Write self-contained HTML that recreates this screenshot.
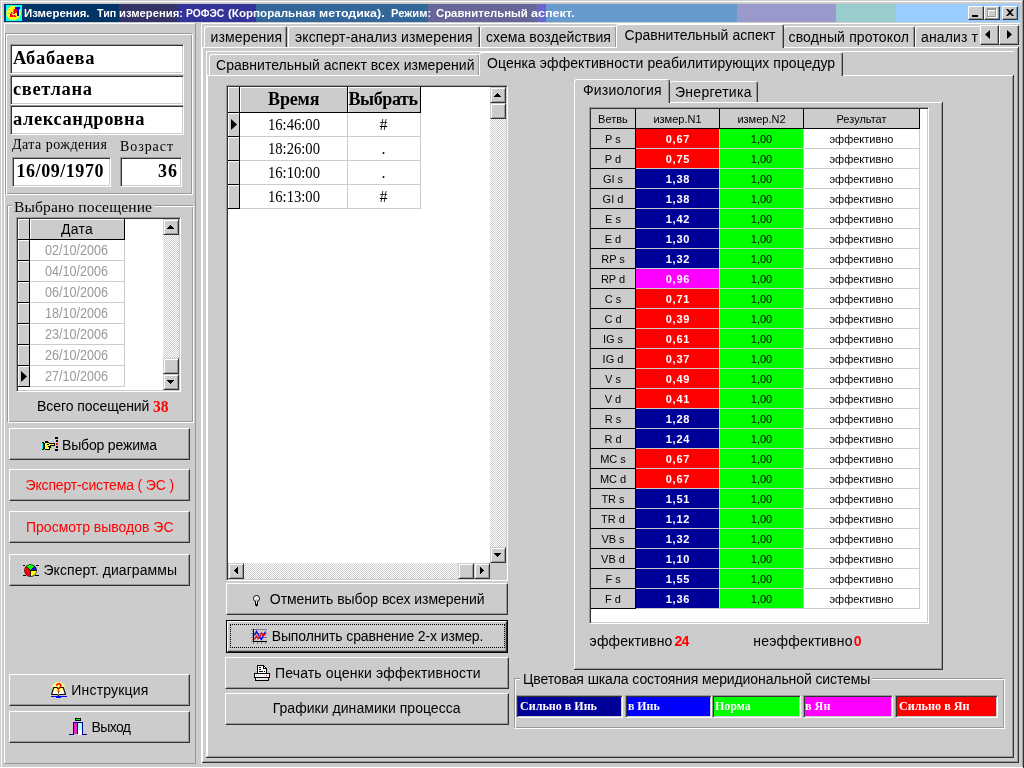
<!DOCTYPE html>
<html lang="ru"><head><meta charset="utf-8"><title>Измерения</title><style>
html,body{margin:0;padding:0}
body{width:1024px;height:768px;overflow:hidden;background:#cccccc;position:relative;font-family:'Liberation Sans',sans-serif;font-size:14px;color:#000}
#w{position:absolute;left:0;top:0;width:1024px;height:768px;will-change:transform}
.a{position:absolute;box-sizing:content-box}
.t{white-space:pre}
.rs{border:1px solid;border-color:#fff #333 #333 #fff;box-shadow:inset -1px -1px 0 #999;background:#ccc}
.sb{border:1px solid;border-color:#ccc #333 #333 #ccc;box-shadow:inset 1px 1px 0 #fff,inset -1px -1px 0 #999;background:#ccc}
.sk{border:1px solid;border-color:#999 #fff #fff #999;box-shadow:inset 1px 1px 0 #333,inset -1px -1px 0 #ccc}
.et{border:1px solid;border-color:#999 #fff #fff #999;box-shadow:inset 1px 1px 0 #fff,inset -1px -1px 0 #999}
.tab{background:#ccc;box-sizing:border-box;border-left:1px solid #fff;border-top:1px solid #fff;border-right:1px solid #333;border-radius:3px 3px 0 0;box-shadow:inset -1px 0 0 #999}
.trk{background-color:#fff;background-image:linear-gradient(45deg,#ccc 25%,transparent 25%,transparent 75%,#ccc 75%),linear-gradient(45deg,#ccc 25%,transparent 25%,transparent 75%,#ccc 75%);background-size:2px 2px;background-position:0 0,1px 1px}
</style></head><body><div id="w">
<div class="a " style="left:1px;top:1px;width:1022px;height:1px;background:#ffffff"></div>
<div class="a " style="left:1px;top:1px;width:1px;height:766px;background:#ffffff"></div>
<div class="a " style="left:0px;top:767px;width:1024px;height:1px;background:#ffffff"></div>
<div class="a " style="left:1022px;top:1px;width:1px;height:766px;background:#999999"></div>
<div class="a " style="left:1023px;top:0px;width:1px;height:768px;background:#333333"></div>
<div class="a " style="left:4px;top:4px;width:115px;height:18px;background:#003366"></div>
<div class="a " style="left:119px;top:4px;width:58px;height:18px;background:#333366"></div>
<div class="a " style="left:177px;top:4px;width:79px;height:18px;background:#333399"></div>
<div class="a " style="left:256px;top:4px;width:172px;height:18px;background:#336699"></div>
<div class="a " style="left:428px;top:4px;width:109px;height:18px;background:#666699"></div>
<div class="a " style="left:537px;top:4px;width:9px;height:18px;background:#6666cc"></div>
<div class="a " style="left:546px;top:4px;width:191px;height:18px;background:#6699cc"></div>
<div class="a " style="left:737px;top:4px;width:99px;height:18px;background:#9999cc"></div>
<div class="a " style="left:836px;top:4px;width:60px;height:18px;background:#99cccc"></div>
<div class="a " style="left:896px;top:4px;width:124px;height:18px;background:#99ccff"></div>
<svg class="a" style="left:6px;top:5px" width="16" height="16" viewBox="0 0 16 16" shape-rendering="crispEdges"><rect width="16" height="16" fill="#00ffff"/><circle cx="7.5" cy="8" r="7.3" fill="#ffff00" shape-rendering="auto"/><path d="M5 8h3V5h2v3M5 8v3h5" stroke="#ff0000" stroke-width="1.2" fill="none"/><path d="M12 2v8M9 3h5M11 10h2" stroke="#0000ff" stroke-width="1.2" fill="none"/><path d="M2 3l10 10M7.5 1v14M1 8h6" stroke="#cccccc" stroke-width="0.6" fill="none"/><rect x="7" y="8" width="1" height="1" fill="#00cc00"/></svg>
<div class="a t" style="left:23.8px;top:6px;line-height:14px;font-family:'Liberation Sans',sans-serif;font-size:11.5px;font-weight:bold;color:#fff;transform:scaleX(0.9931);transform-origin:0 0;">Измерения.</div>
<div class="a t" style="left:96.6px;top:6px;line-height:14px;font-family:'Liberation Sans',sans-serif;font-size:11.5px;font-weight:bold;color:#fff;transform:scaleX(0.9316);transform-origin:0 0;">Тип</div>
<div class="a t" style="left:119.3px;top:6px;line-height:14px;font-family:'Liberation Sans',sans-serif;font-size:11.5px;font-weight:bold;color:#fff;transform:scaleX(0.9787);transform-origin:0 0;">измерения:</div>
<div class="a t" style="left:185.5px;top:6px;line-height:14px;font-family:'Liberation Sans',sans-serif;font-size:11.5px;font-weight:bold;color:#fff;transform:scaleX(0.8956);transform-origin:0 0;">РОФЭС</div>
<div class="a t" style="left:228px;top:6px;line-height:14px;font-family:'Liberation Sans',sans-serif;font-size:11.5px;font-weight:bold;color:#fff;transform:scaleX(1.0079);transform-origin:0 0;">(Корпоральная</div>
<div class="a t" style="left:319.2px;top:6px;line-height:14px;font-family:'Liberation Sans',sans-serif;font-size:11.5px;font-weight:bold;color:#fff;transform:scaleX(1.0815);transform-origin:0 0;">методика).</div>
<div class="a t" style="left:390.6px;top:6px;line-height:14px;font-family:'Liberation Sans',sans-serif;font-size:11.5px;font-weight:bold;color:#fff;transform:scaleX(0.9757);transform-origin:0 0;">Режим:</div>
<div class="a t" style="left:435.8px;top:6px;line-height:14px;font-family:'Liberation Sans',sans-serif;font-size:11.5px;font-weight:bold;color:#fff;transform:scaleX(0.9854);transform-origin:0 0;">Сравнительный</div>
<div class="a t" style="left:531px;top:6px;line-height:14px;font-family:'Liberation Sans',sans-serif;font-size:11.5px;font-weight:bold;color:#fff;transform:scaleX(1.0952);transform-origin:0 0;">аспект.</div>
<div class="a rs " style="left:968px;top:6px;width:14px;height:12px;"><div class="a" style="left:3px;top:8px;width:6px;height:2px;background:#000"></div></div>
<div class="a rs " style="left:984px;top:6px;width:14px;height:12px;"><div class="a" style="left:3px;top:2px;width:7px;height:6px;border:1px solid #fff;border-top-width:2px"></div><div class="a" style="left:2px;top:1px;width:7px;height:6px;border:1px solid #999;border-top-width:2px"></div></div>
<div class="a rs " style="left:1002px;top:6px;width:14px;height:12px;"><svg class="a" style="left:3px;top:2px" width="8" height="7" viewBox="0 0 8 7"><path d="M0 0h2l2 2 2-2h2L5 3.5 8 7H6L4 5 2 7H0L3 3.5z" fill="#000"/></svg></div>
<div class="a " style="left:4px;top:23px;width:192px;height:1px;background:#ffffff"></div>
<div class="a " style="left:4px;top:23px;width:1px;height:740px;background:#ffffff"></div>
<div class="a " style="left:195px;top:23px;width:1px;height:741px;background:#999999"></div>
<div class="a " style="left:4px;top:763px;width:192px;height:1px;background:#999999"></div>
<div class="a et" style="left:5px;top:33px;width:186px;height:160px;"></div>
<div class="a sk " style="left:10px;top:44px;width:172px;height:28px;background:#fff"></div>
<div class="a sk " style="left:10px;top:75px;width:172px;height:28px;background:#fff"></div>
<div class="a sk " style="left:10px;top:105px;width:172px;height:28px;background:#fff"></div>
<div class="a t" style="left:13px;top:47px;line-height:23px;font-family:'Liberation Serif',serif;font-size:18.5px;font-weight:bold;letter-spacing:0.66px;">Абабаева</div>
<div class="a t" style="left:13px;top:78px;line-height:23px;font-family:'Liberation Serif',serif;font-size:18.5px;font-weight:bold;letter-spacing:0.63px;">светлана</div>
<div class="a t" style="left:13px;top:108px;line-height:23px;font-family:'Liberation Serif',serif;font-size:18.5px;font-weight:bold;letter-spacing:0.55px;">александровна</div>
<div class="a t" style="left:12px;top:136px;line-height:18px;font-family:'Liberation Serif',serif;font-size:14px;letter-spacing:0.46px;">Дата рождения</div>
<div class="a t" style="left:120px;top:138px;line-height:18px;font-family:'Liberation Serif',serif;font-size:14px;letter-spacing:0.93px;">Возраст</div>
<div class="a sk " style="left:12px;top:157px;width:97px;height:28px;background:#fff"></div>
<div class="a sk " style="left:120px;top:157px;width:60px;height:28px;background:#fff"></div>
<div class="a t" style="left:16.5px;top:160px;line-height:22px;font-family:'Liberation Serif',serif;font-size:18px;font-weight:bold;letter-spacing:0.55px;">16/09/1970</div>
<div class="a t" style="left:158px;top:160px;line-height:22px;font-family:'Liberation Serif',serif;font-size:18px;font-weight:bold;letter-spacing:1px;">36</div>
<div class="a et" style="left:7px;top:205px;width:185px;height:216px;"></div>
<div class="a " style="left:12px;top:199px;width:142px;height:12px;background:#ccc"></div>
<div class="a t" style="left:14px;top:197px;line-height:19px;font-family:'Liberation Serif',serif;font-size:15.5px;letter-spacing:0.13px;">Выбрано посещение</div>
<div class="a sk " style="left:16px;top:217px;width:163px;height:173px;background:#fff"></div>
<div class="a " style="left:18px;top:219px;width:11px;height:20px;background:#ccc;box-shadow:inset 1px 1px 0 #fff;"></div>
<div class="a " style="left:29px;top:219px;width:1px;height:21px;background:#000000"></div>
<div class="a " style="left:30px;top:219px;width:94px;height:20px;background:#ccc;box-shadow:inset 1px 1px 0 #fff;"></div>
<div class="a t" style="left:61px;top:220px;line-height:18px;font-family:'Liberation Sans',sans-serif;font-size:14px;letter-spacing:0.26px;">Дата</div>
<div class="a " style="left:124px;top:219px;width:1px;height:21px;background:#000000"></div>
<div class="a " style="left:18px;top:239px;width:107px;height:1px;background:#000000"></div>
<div class="a " style="left:18px;top:240px;width:11px;height:20px;background:#ccc;box-shadow:inset 1px 1px 0 #fff;"></div>
<div class="a " style="left:29px;top:240px;width:1px;height:21px;background:#000000"></div>
<div class="a " style="left:18px;top:260px;width:12px;height:1px;background:#000000"></div>
<div class="a t" style="left:45.4px;top:241px;line-height:18px;font-family:'Liberation Sans',sans-serif;font-size:14px;color:#999;transform:scaleX(0.899);transform-origin:0 0;">02/10/2006</div>
<div class="a " style="left:30px;top:260px;width:94px;height:1px;background:#cccccc"></div>
<div class="a " style="left:124px;top:240px;width:1px;height:21px;background:#cccccc"></div>
<div class="a " style="left:18px;top:261px;width:11px;height:20px;background:#ccc;box-shadow:inset 1px 1px 0 #fff;"></div>
<div class="a " style="left:29px;top:261px;width:1px;height:21px;background:#000000"></div>
<div class="a " style="left:18px;top:281px;width:12px;height:1px;background:#000000"></div>
<div class="a t" style="left:45.4px;top:262px;line-height:18px;font-family:'Liberation Sans',sans-serif;font-size:14px;color:#999;transform:scaleX(0.899);transform-origin:0 0;">04/10/2006</div>
<div class="a " style="left:30px;top:281px;width:94px;height:1px;background:#cccccc"></div>
<div class="a " style="left:124px;top:261px;width:1px;height:21px;background:#cccccc"></div>
<div class="a " style="left:18px;top:282px;width:11px;height:20px;background:#ccc;box-shadow:inset 1px 1px 0 #fff;"></div>
<div class="a " style="left:29px;top:282px;width:1px;height:21px;background:#000000"></div>
<div class="a " style="left:18px;top:302px;width:12px;height:1px;background:#000000"></div>
<div class="a t" style="left:45.4px;top:283px;line-height:18px;font-family:'Liberation Sans',sans-serif;font-size:14px;color:#999;transform:scaleX(0.899);transform-origin:0 0;">06/10/2006</div>
<div class="a " style="left:30px;top:302px;width:94px;height:1px;background:#cccccc"></div>
<div class="a " style="left:124px;top:282px;width:1px;height:21px;background:#cccccc"></div>
<div class="a " style="left:18px;top:303px;width:11px;height:20px;background:#ccc;box-shadow:inset 1px 1px 0 #fff;"></div>
<div class="a " style="left:29px;top:303px;width:1px;height:21px;background:#000000"></div>
<div class="a " style="left:18px;top:323px;width:12px;height:1px;background:#000000"></div>
<div class="a t" style="left:45.4px;top:304px;line-height:18px;font-family:'Liberation Sans',sans-serif;font-size:14px;color:#999;transform:scaleX(0.899);transform-origin:0 0;">18/10/2006</div>
<div class="a " style="left:30px;top:323px;width:94px;height:1px;background:#cccccc"></div>
<div class="a " style="left:124px;top:303px;width:1px;height:21px;background:#cccccc"></div>
<div class="a " style="left:18px;top:324px;width:11px;height:20px;background:#ccc;box-shadow:inset 1px 1px 0 #fff;"></div>
<div class="a " style="left:29px;top:324px;width:1px;height:21px;background:#000000"></div>
<div class="a " style="left:18px;top:344px;width:12px;height:1px;background:#000000"></div>
<div class="a t" style="left:45.4px;top:325px;line-height:18px;font-family:'Liberation Sans',sans-serif;font-size:14px;color:#999;transform:scaleX(0.899);transform-origin:0 0;">23/10/2006</div>
<div class="a " style="left:30px;top:344px;width:94px;height:1px;background:#cccccc"></div>
<div class="a " style="left:124px;top:324px;width:1px;height:21px;background:#cccccc"></div>
<div class="a " style="left:18px;top:345px;width:11px;height:20px;background:#ccc;box-shadow:inset 1px 1px 0 #fff;"></div>
<div class="a " style="left:29px;top:345px;width:1px;height:21px;background:#000000"></div>
<div class="a " style="left:18px;top:365px;width:12px;height:1px;background:#000000"></div>
<div class="a t" style="left:45.4px;top:346px;line-height:18px;font-family:'Liberation Sans',sans-serif;font-size:14px;color:#999;transform:scaleX(0.899);transform-origin:0 0;">26/10/2006</div>
<div class="a " style="left:30px;top:365px;width:94px;height:1px;background:#cccccc"></div>
<div class="a " style="left:124px;top:345px;width:1px;height:21px;background:#cccccc"></div>
<div class="a " style="left:18px;top:366px;width:11px;height:20px;background:#ccc;box-shadow:inset 1px 1px 0 #fff;"></div>
<div class="a " style="left:29px;top:366px;width:1px;height:21px;background:#000000"></div>
<div class="a " style="left:18px;top:386px;width:12px;height:1px;background:#000000"></div>
<div class="a t" style="left:45.4px;top:367px;line-height:18px;font-family:'Liberation Sans',sans-serif;font-size:14px;color:#999;transform:scaleX(0.899);transform-origin:0 0;">27/10/2006</div>
<div class="a " style="left:30px;top:386px;width:94px;height:1px;background:#cccccc"></div>
<div class="a " style="left:124px;top:366px;width:1px;height:21px;background:#cccccc"></div>
<svg class="a" style="left:21px;top:371px" width="6" height="11"><path d="M0 0l6 5.5L0 11z" fill="#000"/></svg>
<div class="a trk" style="left:163px;top:219px;width:16px;height:171px;"></div>
<div class="a sb" style="left:163px;top:219px;width:14px;height:14px;"><div class="a" style="left:6px;top:5px;width:1px;height:1px;background:#000"></div><div class="a" style="left:5px;top:6px;width:3px;height:1px;background:#000"></div><div class="a" style="left:4px;top:7px;width:5px;height:1px;background:#000"></div><div class="a" style="left:3px;top:8px;width:7px;height:1px;background:#000"></div></div>
<div class="a sb" style="left:163px;top:358px;width:14px;height:14px;"></div>
<div class="a sb" style="left:163px;top:374px;width:14px;height:14px;"><div class="a" style="left:3px;top:5px;width:7px;height:1px;background:#000"></div><div class="a" style="left:4px;top:6px;width:5px;height:1px;background:#000"></div><div class="a" style="left:5px;top:7px;width:3px;height:1px;background:#000"></div><div class="a" style="left:6px;top:8px;width:1px;height:1px;background:#000"></div></div>
<div class="a t" style="left:37px;top:397px;line-height:18px;font-family:'Liberation Sans',sans-serif;font-size:14px;letter-spacing:-0.06px;">Всего посещений</div>
<div class="a t" style="left:152.8px;top:396px;line-height:21px;font-family:'Liberation Serif',serif;font-size:17px;font-weight:bold;color:#f00;transform:scaleX(0.9118);transform-origin:0 0;">38</div>
<div class="a rs " style="left:9px;top:428px;width:179px;height:30px;"></div>
<div class="a" style="left:42px;top:437px;line-height:0"><svg width="17" height="15" viewBox="0 0 17 15" shape-rendering="crispEdges"><rect x="0" y="5" width="2" height="8" fill="#000"/><rect x="0" y="6" width="1" height="6" fill="#00ffff"/><path d="M2.5 6.5L3.5 5.5 6.5 5.5 7.5 6.5 12.5 6.5 12.5 8.5 8.5 8.5 8.5 10.5 7.5 10.5 7.5 12.5 3.5 12.5 2.5 11.5z" fill="#ffff33" stroke="#000" stroke-width="1"/><rect x="3" y="4" width="3" height="1" fill="#000"/><rect x="5" y="7" width="2" height="1" fill="#000"/><rect x="6" y="9" width="2" height="1" fill="#000"/><rect x="13" y="0" width="3" height="2" fill="#000"/><rect x="14" y="3" width="2" height="2" fill="#000"/><rect x="14" y="6" width="2" height="2" fill="#f00"/><rect x="14" y="9" width="2" height="2" fill="#000"/><rect x="13" y="12" width="3" height="2" fill="#000"/></svg></div>
<div class="a t" style="left:62px;top:436px;line-height:18px;font-family:'Liberation Sans',sans-serif;font-size:14px;letter-spacing:-0.17px;">Выбор режима</div>
<div class="a rs " style="left:9px;top:469px;width:179px;height:30px;"></div>
<div class="a t" style="left:25.5px;top:476px;line-height:18px;font-family:'Liberation Sans',sans-serif;font-size:14px;letter-spacing:-0.15px;color:#f00;">Эксперт-система ( ЭС )</div>
<div class="a rs " style="left:9px;top:511px;width:179px;height:30px;"></div>
<div class="a t" style="left:26px;top:518px;line-height:18px;font-family:'Liberation Sans',sans-serif;font-size:14px;color:#f00;">Просмотр выводов ЭС</div>
<div class="a rs " style="left:9px;top:554px;width:179px;height:30px;"></div>
<div class="a" style="left:22px;top:563px;line-height:0"><svg width="17" height="15" viewBox="0 0 17 15"><circle cx="8.5" cy="7.5" r="6.3" fill="#000"/><path d="M8.5 7.5L4.4 3.4A5.8 5.8 0 0 1 12.6 3.4z" fill="#00ff00"/><path d="M8.5 7.5L12.6 3.4A5.8 5.8 0 0 1 14.3 7.5z" fill="#0000ff"/><path d="M8.5 7.5H14.3A5.8 5.8 0 0 1 8.5 13.3z" fill="#ffff00"/><path d="M8.5 7.5V13.3A5.8 5.8 0 0 1 4.4 3.4z" fill="#ff0000"/><path d="M8.5 7.5L4.4 3.4M8.5 7.5L12.6 3.4M8.5 7.5H14.3M8.5 7.5V13.3" stroke="#000" stroke-width="0.8" fill="none"/><path d="M1 2.5h2M14 2.5h3M1 12.5h3M13 12.5h4" stroke="#000" shape-rendering="crispEdges"/></svg></div>
<div class="a t" style="left:43.5px;top:561px;line-height:18px;font-family:'Liberation Sans',sans-serif;font-size:14px;letter-spacing:0.05px;">Эксперт. диаграммы</div>
<div class="a rs " style="left:9px;top:674px;width:179px;height:30px;"></div>
<div class="a" style="left:51px;top:682px;line-height:0"><svg width="16" height="16" viewBox="0 0 16 16"><path d="M5 0H10L13.5 3.5V8H1.5V3.5Z" fill="#ffff77"/><path d="M1.2 12L2.6 8H12.4L13.8 12Z" fill="#fff"/><path d="M4.5 6H10.5V10.5H4.5Z" fill="#ffff77"/><path d="M0.5 12.5L2.7 5.5H6L7.5 7 9 5.5H12.3L14.5 12.5" fill="none" stroke="#000" stroke-width="1.1"/><path d="M0.5 12.5H6L7.5 13.5 9 12.5H14.5" stroke="#000" fill="none"/><path d="M7.5 9.5V13" stroke="#666" stroke-width="0.8"/><path d="M0 14.5h15.5M5 15.5h5" stroke="#0000ff" shape-rendering="crispEdges"/><text x="4.1" y="9.9" font-family="Liberation Sans,sans-serif" font-weight="bold" font-size="13" fill="#f00" transform="translate(0.6 0) scale(0.88 1)">?</text></svg></div>
<div class="a t" style="left:71.3px;top:681px;line-height:18px;font-family:'Liberation Sans',sans-serif;font-size:14px;letter-spacing:0.19px;">Инструкция</div>
<div class="a rs " style="left:9px;top:711px;width:179px;height:30px;"></div>
<div class="a" style="left:69px;top:718px;line-height:0"><svg width="19" height="17" viewBox="0 0 19 17" shape-rendering="crispEdges"><rect x="6" y="0" width="6" height="3" fill="#000"/><rect x="7" y="1" width="4" height="1" fill="#00ff00"/><rect x="5" y="5" width="3" height="11" fill="#ee22cc"/><rect x="8" y="5" width="1" height="11" fill="#000"/><rect x="9" y="5" width="4" height="12" fill="#fff"/><rect x="9" y="5" width="4" height="7" fill="#aaffff"/><path d="M0 16.5H4.5V4.5H13.5V16.5H18" stroke="#000099" fill="none"/></svg></div>
<div class="a t" style="left:91.6px;top:718px;line-height:18px;font-family:'Liberation Sans',sans-serif;font-size:14px;letter-spacing:-0.65px;">Выход</div>
<div class="a " style="left:201px;top:23px;width:819px;height:1px;background:#ffffff"></div>
<div class="a " style="left:201px;top:23px;width:1px;height:741px;background:#ffffff"></div>
<div class="a " style="left:202px;top:47px;width:817px;height:1px;background:#ffffff"></div>
<div class="a " style="left:202px;top:47px;width:1px;height:715px;background:#ffffff"></div>
<div class="a " style="left:1017px;top:48px;width:1px;height:714px;background:#999999"></div>
<div class="a " style="left:1018px;top:47px;width:1px;height:716px;background:#333333"></div>
<div class="a " style="left:203px;top:761px;width:815px;height:1px;background:#999999"></div>
<div class="a " style="left:202px;top:762px;width:817px;height:1px;background:#333333"></div>
<div class="a tab" style="left:204px;top:26px;width:83px;height:21px;"></div>
<div class="a t" style="left:210.5px;top:28px;line-height:18px;font-family:'Liberation Sans',sans-serif;font-size:14px;letter-spacing:0.14px;">измерения</div>
<div class="a tab" style="left:288px;top:26px;width:192px;height:21px;"></div>
<div class="a t" style="left:295px;top:28px;line-height:18px;font-family:'Liberation Sans',sans-serif;font-size:14px;letter-spacing:0.14px;">эксперт-анализ измерения</div>
<div class="a tab" style="left:480px;top:26px;width:137px;height:21px;"></div>
<div class="a t" style="left:486px;top:28px;line-height:18px;font-family:'Liberation Sans',sans-serif;font-size:14px;letter-spacing:0.06px;">схема воздействия</div>
<div class="a tab" style="left:783px;top:26px;width:132px;height:21px;"></div>
<div class="a t" style="left:788.5px;top:28px;line-height:18px;font-family:'Liberation Sans',sans-serif;font-size:14px;letter-spacing:0.15px;">сводный протокол</div>
<div class="a " style="left:915px;top:26px;width:66px;height:21px;overflow:hidden"><div class="tab" style="position:absolute;left:0;top:0;width:120px;height:21px"></div></div>
<div class="a t" style="left:921px;top:28px;line-height:18px;font-family:'Liberation Sans',sans-serif;font-size:14px;letter-spacing:0.14px;">анализ т</div>
<div class="a tab sel" style="left:616px;top:24px;width:168px;height:24px;"></div>
<div class="a t" style="left:624.5px;top:26px;line-height:18px;font-family:'Liberation Sans',sans-serif;font-size:14px;letter-spacing:0.05px;">Сравнительный аспект</div>
<div class="a rs " style="left:980px;top:25px;width:17px;height:18px;"><svg class="a" style="left:4px;top:4px" width="5" height="9"><path d="M5 0v9L0 4.5z" fill="#000"/></svg></div>
<div class="a rs " style="left:999px;top:25px;width:18px;height:18px;"><svg class="a" style="left:7px;top:4px" width="5" height="9"><path d="M0 0l5 4.5L0 9z" fill="#000"/></svg></div>
<div class="a " style="left:206px;top:51px;width:808px;height:1px;background:#ffffff"></div>
<div class="a " style="left:206px;top:51px;width:1px;height:706px;background:#ffffff"></div>
<div class="a " style="left:207px;top:75px;width:806px;height:1px;background:#ffffff"></div>
<div class="a " style="left:207px;top:75px;width:1px;height:682px;background:#ffffff"></div>
<div class="a " style="left:1012px;top:76px;width:1px;height:681px;background:#999999"></div>
<div class="a " style="left:1013px;top:75px;width:1px;height:683px;background:#333333"></div>
<div class="a " style="left:207px;top:756px;width:806px;height:1px;background:#999999"></div>
<div class="a " style="left:206px;top:757px;width:808px;height:1px;background:#333333"></div>
<div class="a tab" style="left:209px;top:54px;width:271px;height:21px;"></div>
<div class="a t" style="left:216px;top:56px;line-height:18px;font-family:'Liberation Sans',sans-serif;font-size:14px;letter-spacing:0.04px;">Сравнительный аспект всех измерений</div>
<div class="a tab sel" style="left:479px;top:52px;width:364px;height:24px;"></div>
<div class="a t" style="left:487px;top:54px;line-height:18px;font-family:'Liberation Sans',sans-serif;font-size:14px;letter-spacing:0.07px;">Оценка эффективности реабилитирующих процедур</div>
<div class="a sk " style="left:226px;top:85px;width:280px;height:494px;background:#fff"></div>
<div class="a " style="left:228px;top:87px;width:11px;height:25px;background:#ccc;box-shadow:inset 1px 1px 0 #fff;"></div>
<div class="a " style="left:239px;top:87px;width:1px;height:26px;background:#000000"></div>
<div class="a " style="left:240px;top:87px;width:107px;height:25px;background:#ccc;box-shadow:inset 1px 1px 0 #fff;"></div>
<div class="a " style="left:347px;top:87px;width:1px;height:26px;background:#000000"></div>
<div class="a " style="left:348px;top:87px;width:72px;height:25px;background:#ccc;box-shadow:inset 1px 1px 0 #fff;"></div>
<div class="a " style="left:420px;top:87px;width:1px;height:26px;background:#000000"></div>
<div class="a " style="left:228px;top:112px;width:193px;height:1px;background:#000000"></div>
<div class="a t" style="left:268px;top:88px;line-height:22px;font-family:'Liberation Serif',serif;font-size:18px;font-weight:bold;letter-spacing:-0.13px;">Время</div>
<div class="a t" style="left:348.5px;top:88px;line-height:22px;font-family:'Liberation Serif',serif;font-size:18px;font-weight:bold;letter-spacing:-0.41px;">Выбрать</div>
<div class="a " style="left:228px;top:113px;width:11px;height:23px;background:#ccc;box-shadow:inset 1px 1px 0 #fff;"></div>
<div class="a " style="left:239px;top:113px;width:1px;height:24px;background:#000000"></div>
<div class="a " style="left:228px;top:136px;width:12px;height:1px;background:#000000"></div>
<div class="a t" style="left:267.5px;top:115px;line-height:20px;font-family:'Liberation Serif',serif;font-size:16px;transform:scaleX(0.914);transform-origin:0 0;">16:46:00</div>
<div class="a " style="left:347px;top:113px;width:1px;height:24px;background:#ccc"></div>
<div class="a t" style="left:379.5px;top:115px;line-height:20px;font-family:'Liberation Serif',serif;font-size:16px;">#</div>
<div class="a " style="left:420px;top:113px;width:1px;height:24px;background:#ccc"></div>
<div class="a " style="left:240px;top:136px;width:181px;height:1px;background:#ccc"></div>
<div class="a " style="left:228px;top:137px;width:11px;height:23px;background:#ccc;box-shadow:inset 1px 1px 0 #fff;"></div>
<div class="a " style="left:239px;top:137px;width:1px;height:24px;background:#000000"></div>
<div class="a " style="left:228px;top:160px;width:12px;height:1px;background:#000000"></div>
<div class="a t" style="left:267.5px;top:139px;line-height:20px;font-family:'Liberation Serif',serif;font-size:16px;transform:scaleX(0.914);transform-origin:0 0;">18:26:00</div>
<div class="a " style="left:347px;top:137px;width:1px;height:24px;background:#ccc"></div>
<div class="a t" style="left:381.5px;top:139px;line-height:20px;font-family:'Liberation Serif',serif;font-size:16px;">.</div>
<div class="a " style="left:420px;top:137px;width:1px;height:24px;background:#ccc"></div>
<div class="a " style="left:240px;top:160px;width:181px;height:1px;background:#ccc"></div>
<div class="a " style="left:228px;top:161px;width:11px;height:23px;background:#ccc;box-shadow:inset 1px 1px 0 #fff;"></div>
<div class="a " style="left:239px;top:161px;width:1px;height:24px;background:#000000"></div>
<div class="a " style="left:228px;top:184px;width:12px;height:1px;background:#000000"></div>
<div class="a t" style="left:267.5px;top:163px;line-height:20px;font-family:'Liberation Serif',serif;font-size:16px;transform:scaleX(0.914);transform-origin:0 0;">16:10:00</div>
<div class="a " style="left:347px;top:161px;width:1px;height:24px;background:#ccc"></div>
<div class="a t" style="left:381.5px;top:163px;line-height:20px;font-family:'Liberation Serif',serif;font-size:16px;">.</div>
<div class="a " style="left:420px;top:161px;width:1px;height:24px;background:#ccc"></div>
<div class="a " style="left:240px;top:184px;width:181px;height:1px;background:#ccc"></div>
<div class="a " style="left:228px;top:185px;width:11px;height:23px;background:#ccc;box-shadow:inset 1px 1px 0 #fff;"></div>
<div class="a " style="left:239px;top:185px;width:1px;height:24px;background:#000000"></div>
<div class="a " style="left:228px;top:208px;width:12px;height:1px;background:#000000"></div>
<div class="a t" style="left:267.5px;top:187px;line-height:20px;font-family:'Liberation Serif',serif;font-size:16px;transform:scaleX(0.914);transform-origin:0 0;">16:13:00</div>
<div class="a " style="left:347px;top:185px;width:1px;height:24px;background:#ccc"></div>
<div class="a t" style="left:379.5px;top:187px;line-height:20px;font-family:'Liberation Serif',serif;font-size:16px;">#</div>
<div class="a " style="left:420px;top:185px;width:1px;height:24px;background:#ccc"></div>
<div class="a " style="left:240px;top:208px;width:181px;height:1px;background:#ccc"></div>
<svg class="a" style="left:231px;top:119px" width="6" height="11"><path d="M0 0l6 5.5L0 11z" fill="#000"/></svg>
<div class="a trk" style="left:490px;top:87px;width:16px;height:476px;"></div>
<div class="a sb" style="left:490px;top:87px;width:14px;height:14px;"><div class="a" style="left:6px;top:5px;width:1px;height:1px;background:#000"></div><div class="a" style="left:5px;top:6px;width:3px;height:1px;background:#000"></div><div class="a" style="left:4px;top:7px;width:5px;height:1px;background:#000"></div><div class="a" style="left:3px;top:8px;width:7px;height:1px;background:#000"></div></div>
<div class="a sb" style="left:490px;top:103px;width:14px;height:14px;"></div>
<div class="a sb" style="left:490px;top:547px;width:14px;height:14px;"><div class="a" style="left:3px;top:5px;width:7px;height:1px;background:#000"></div><div class="a" style="left:4px;top:6px;width:5px;height:1px;background:#000"></div><div class="a" style="left:5px;top:7px;width:3px;height:1px;background:#000"></div><div class="a" style="left:6px;top:8px;width:1px;height:1px;background:#000"></div></div>
<div class="a trk" style="left:228px;top:563px;width:262px;height:16px;"></div>
<div class="a sb" style="left:228px;top:563px;width:14px;height:14px;"><div class="a" style="left:8px;top:3px;width:1px;height:7px;background:#000"></div><div class="a" style="left:7px;top:4px;width:1px;height:5px;background:#000"></div><div class="a" style="left:6px;top:5px;width:1px;height:3px;background:#000"></div><div class="a" style="left:5px;top:6px;width:1px;height:1px;background:#000"></div></div>
<div class="a sb" style="left:458px;top:563px;width:14px;height:14px;"></div>
<div class="a sb" style="left:474px;top:563px;width:14px;height:14px;"><div class="a" style="left:5px;top:3px;width:1px;height:7px;background:#000"></div><div class="a" style="left:6px;top:4px;width:1px;height:5px;background:#000"></div><div class="a" style="left:7px;top:5px;width:1px;height:3px;background:#000"></div><div class="a" style="left:8px;top:6px;width:1px;height:1px;background:#000"></div></div>
<div class="a " style="left:490px;top:563px;width:16px;height:16px;background:#ccc"></div>
<div class="a rs " style="left:226px;top:583px;width:280px;height:30px;"></div>
<div class="a" style="left:253px;top:595px;line-height:0"><svg width="7" height="12" viewBox="0 0 7 12"><circle cx="3.5" cy="3.5" r="3" fill="#fff" stroke="#000"/><path d="M2 6.5V10L3.5 11.8 5 10V6.5z" fill="#000"/><path d="M3.5 3.5V9" stroke="#fff" stroke-width="0.9"/><path d="M3.5 3.5V6" stroke="#888" stroke-width="0.6"/></svg></div>
<div class="a t" style="left:269.8px;top:590px;line-height:18px;font-family:'Liberation Sans',sans-serif;font-size:14px;letter-spacing:-0.05px;">Отменить выбор всех измерений</div>
<div class="a " style="left:226px;top:620px;width:282px;height:33px;background:#000"></div>
<div class="a rs " style="left:227px;top:621px;width:278px;height:29px;"></div>
<div class="a" style="left:251px;top:629px;line-height:0"><svg width="16" height="15" viewBox="0 0 16 15"><g shape-rendering="crispEdges"><path d="M0 0.5h16M0 4.5h16M0 8.5h16" stroke="#808080"/><path d="M2.5 0V13M2 12.5H16" stroke="#000"/><path d="M0 12.5h2M2.5 13v2M6.5 13v2M10.5 13v2M14.5 13v2M1 2.5h1M1 6.5h1M1 10.5h1" stroke="#808080"/></g><path d="M3.5 6.5L5.5 2.5 7.5 6 9.5 9.5 10.5 10.5 12 7 14.5 2.5" stroke="#0000ff" fill="none" stroke-width="1.3"/><path d="M3.5 10.5L5.5 7 7 9.5 8.5 8.5 10.5 4 12.5 7 14.5 4.5" stroke="#ff0000" fill="none" stroke-width="1.3"/></svg></div>
<div class="a t" style="left:271.7px;top:627px;line-height:18px;font-family:'Liberation Sans',sans-serif;font-size:14px;letter-spacing:-0.12px;">Выполнить сравнение 2-х измер.</div>
<div class="a " style="left:230px;top:624px;width:275px;height:24px;border:1px dotted #000;box-sizing:border-box"></div>
<div class="a rs " style="left:225px;top:657px;width:282px;height:30px;"></div>
<div class="a" style="left:254px;top:665px;line-height:0"><svg width="16" height="16" viewBox="0 0 16 16" shape-rendering="crispEdges"><path d="M3.5 8V0.5H9.5L12.5 3.5V8z" fill="#fff" stroke="#000"/><path d="M9.5 0.5V3.5H12.5" fill="none" stroke="#000"/><path d="M5 2.5h2M5 4.5h2M5 6.5h4M10 6.5h1" stroke="#000"/><rect x="0.5" y="8.5" width="15" height="4" fill="#fff" stroke="#000"/><rect x="12" y="10" width="1" height="1" fill="#f00"/><path d="M2 10.5h9" stroke="#ccc" stroke-dasharray="1 1"/><rect x="1.5" y="12.5" width="13" height="3" fill="#e6e6e6" stroke="#000"/></svg></div>
<div class="a t" style="left:275px;top:664px;line-height:18px;font-family:'Liberation Sans',sans-serif;font-size:14px;letter-spacing:0.16px;">Печать оценки эффективности</div>
<div class="a rs " style="left:225px;top:693px;width:282px;height:30px;"></div>
<div class="a t" style="left:272.7px;top:699px;line-height:18px;font-family:'Liberation Sans',sans-serif;font-size:14px;letter-spacing:0.04px;">Графики динамики процесса</div>
<div class="a tab" style="left:669px;top:81px;width:89px;height:21px;"></div>
<div class="a t" style="left:675px;top:83px;line-height:18px;font-family:'Liberation Sans',sans-serif;font-size:14px;letter-spacing:0.28px;">Энергетика</div>
<div class="a " style="left:574px;top:102px;width:368px;height:1px;background:#ffffff"></div>
<div class="a " style="left:574px;top:102px;width:1px;height:567px;background:#ffffff"></div>
<div class="a " style="left:941px;top:103px;width:1px;height:566px;background:#999999"></div>
<div class="a " style="left:942px;top:102px;width:1px;height:568px;background:#333333"></div>
<div class="a " style="left:575px;top:668px;width:367px;height:1px;background:#999999"></div>
<div class="a " style="left:574px;top:669px;width:369px;height:1px;background:#333333"></div>
<div class="a tab sel" style="left:574px;top:79px;width:96px;height:24px;"></div>
<div class="a t" style="left:583px;top:81px;line-height:18px;font-family:'Liberation Sans',sans-serif;font-size:14px;letter-spacing:0.19px;">Физиология</div>
<div class="a sk " style="left:589px;top:107px;width:338px;height:515px;background:#fff"></div>
<div class="a " style="left:591px;top:109px;width:44px;height:19px;background:#ccc"></div>
<div class="a t" style="left:598.1px;top:112px;line-height:14px;font-family:'Liberation Sans',sans-serif;font-size:11px;">Ветвь</div>
<div class="a " style="left:635px;top:109px;width:1px;height:20px;background:#000000"></div>
<div class="a " style="left:636px;top:109px;width:83px;height:19px;background:#ccc"></div>
<div class="a t" style="left:653.4px;top:112px;line-height:14px;font-family:'Liberation Sans',sans-serif;font-size:11px;">измер.N1</div>
<div class="a " style="left:719px;top:109px;width:1px;height:20px;background:#000000"></div>
<div class="a " style="left:720px;top:109px;width:83px;height:19px;background:#ccc"></div>
<div class="a t" style="left:737.4px;top:112px;line-height:14px;font-family:'Liberation Sans',sans-serif;font-size:11px;">измер.N2</div>
<div class="a " style="left:803px;top:109px;width:1px;height:20px;background:#000000"></div>
<div class="a " style="left:804px;top:109px;width:115px;height:19px;background:#ccc"></div>
<div class="a t" style="left:836.5px;top:112px;line-height:14px;font-family:'Liberation Sans',sans-serif;font-size:11px;">Результат</div>
<div class="a " style="left:919px;top:109px;width:1px;height:20px;background:#000000"></div>
<div class="a " style="left:591px;top:128px;width:329px;height:1px;background:#000000"></div>
<div class="a " style="left:591px;top:129px;width:44px;height:19px;background:#ccc"></div>
<div class="a t" style="left:605.1px;top:132px;line-height:14px;font-family:'Liberation Sans',sans-serif;font-size:11px;">P s</div>
<div class="a " style="left:635px;top:129px;width:1px;height:20px;background:#000000"></div>
<div class="a " style="left:591px;top:148px;width:45px;height:1px;background:#000000"></div>
<div class="a " style="left:636px;top:129px;width:83px;height:19px;background:#ff0000"></div>
<div class="a t" style="left:665.7px;top:132px;line-height:14px;font-family:'Liberation Sans',sans-serif;font-size:11px;font-weight:bold;letter-spacing:0.79px;color:#fff;">0,67</div>
<div class="a " style="left:720px;top:129px;width:83px;height:19px;background:#00ff00"></div>
<div class="a t" style="left:750.8px;top:132px;line-height:14px;font-family:'Liberation Sans',sans-serif;font-size:11px;">1,00</div>
<div class="a t" style="left:829.5px;top:132px;line-height:14px;font-family:'Liberation Sans',sans-serif;font-size:11px;">эффективно</div>
<div class="a " style="left:636px;top:148px;width:284px;height:1px;background:#ccc"></div>
<div class="a " style="left:719px;top:129px;width:1px;height:20px;background:#ccc"></div>
<div class="a " style="left:803px;top:129px;width:1px;height:20px;background:#ccc"></div>
<div class="a " style="left:919px;top:129px;width:1px;height:20px;background:#ccc"></div>
<div class="a " style="left:591px;top:149px;width:44px;height:19px;background:#ccc"></div>
<div class="a t" style="left:604.8px;top:152px;line-height:14px;font-family:'Liberation Sans',sans-serif;font-size:11px;">P d</div>
<div class="a " style="left:635px;top:149px;width:1px;height:20px;background:#000000"></div>
<div class="a " style="left:591px;top:168px;width:45px;height:1px;background:#000000"></div>
<div class="a " style="left:636px;top:149px;width:83px;height:19px;background:#ff0000"></div>
<div class="a t" style="left:665.7px;top:152px;line-height:14px;font-family:'Liberation Sans',sans-serif;font-size:11px;font-weight:bold;letter-spacing:0.79px;color:#fff;">0,75</div>
<div class="a " style="left:720px;top:149px;width:83px;height:19px;background:#00ff00"></div>
<div class="a t" style="left:750.8px;top:152px;line-height:14px;font-family:'Liberation Sans',sans-serif;font-size:11px;">1,00</div>
<div class="a t" style="left:829.5px;top:152px;line-height:14px;font-family:'Liberation Sans',sans-serif;font-size:11px;">эффективно</div>
<div class="a " style="left:636px;top:168px;width:284px;height:1px;background:#ccc"></div>
<div class="a " style="left:719px;top:149px;width:1px;height:20px;background:#ccc"></div>
<div class="a " style="left:803px;top:149px;width:1px;height:20px;background:#ccc"></div>
<div class="a " style="left:919px;top:149px;width:1px;height:20px;background:#ccc"></div>
<div class="a " style="left:591px;top:169px;width:44px;height:19px;background:#ccc"></div>
<div class="a t" style="left:602.9px;top:172px;line-height:14px;font-family:'Liberation Sans',sans-serif;font-size:11px;">GI s</div>
<div class="a " style="left:635px;top:169px;width:1px;height:20px;background:#000000"></div>
<div class="a " style="left:591px;top:188px;width:45px;height:1px;background:#000000"></div>
<div class="a " style="left:636px;top:169px;width:83px;height:19px;background:#000099"></div>
<div class="a t" style="left:665.7px;top:172px;line-height:14px;font-family:'Liberation Sans',sans-serif;font-size:11px;font-weight:bold;letter-spacing:0.79px;color:#fff;">1,38</div>
<div class="a " style="left:720px;top:169px;width:83px;height:19px;background:#00ff00"></div>
<div class="a t" style="left:750.8px;top:172px;line-height:14px;font-family:'Liberation Sans',sans-serif;font-size:11px;">1,00</div>
<div class="a t" style="left:829.5px;top:172px;line-height:14px;font-family:'Liberation Sans',sans-serif;font-size:11px;">эффективно</div>
<div class="a " style="left:636px;top:188px;width:284px;height:1px;background:#ccc"></div>
<div class="a " style="left:719px;top:169px;width:1px;height:20px;background:#ccc"></div>
<div class="a " style="left:803px;top:169px;width:1px;height:20px;background:#ccc"></div>
<div class="a " style="left:919px;top:169px;width:1px;height:20px;background:#ccc"></div>
<div class="a " style="left:591px;top:189px;width:44px;height:19px;background:#ccc"></div>
<div class="a t" style="left:602.6px;top:192px;line-height:14px;font-family:'Liberation Sans',sans-serif;font-size:11px;">GI d</div>
<div class="a " style="left:635px;top:189px;width:1px;height:20px;background:#000000"></div>
<div class="a " style="left:591px;top:208px;width:45px;height:1px;background:#000000"></div>
<div class="a " style="left:636px;top:189px;width:83px;height:19px;background:#000099"></div>
<div class="a t" style="left:665.7px;top:192px;line-height:14px;font-family:'Liberation Sans',sans-serif;font-size:11px;font-weight:bold;letter-spacing:0.79px;color:#fff;">1,38</div>
<div class="a " style="left:720px;top:189px;width:83px;height:19px;background:#00ff00"></div>
<div class="a t" style="left:750.8px;top:192px;line-height:14px;font-family:'Liberation Sans',sans-serif;font-size:11px;">1,00</div>
<div class="a t" style="left:829.5px;top:192px;line-height:14px;font-family:'Liberation Sans',sans-serif;font-size:11px;">эффективно</div>
<div class="a " style="left:636px;top:208px;width:284px;height:1px;background:#ccc"></div>
<div class="a " style="left:719px;top:189px;width:1px;height:20px;background:#ccc"></div>
<div class="a " style="left:803px;top:189px;width:1px;height:20px;background:#ccc"></div>
<div class="a " style="left:919px;top:189px;width:1px;height:20px;background:#ccc"></div>
<div class="a " style="left:591px;top:209px;width:44px;height:19px;background:#ccc"></div>
<div class="a t" style="left:605.0px;top:212px;line-height:14px;font-family:'Liberation Sans',sans-serif;font-size:11px;">E s</div>
<div class="a " style="left:635px;top:209px;width:1px;height:20px;background:#000000"></div>
<div class="a " style="left:591px;top:228px;width:45px;height:1px;background:#000000"></div>
<div class="a " style="left:636px;top:209px;width:83px;height:19px;background:#000099"></div>
<div class="a t" style="left:665.7px;top:212px;line-height:14px;font-family:'Liberation Sans',sans-serif;font-size:11px;font-weight:bold;letter-spacing:0.79px;color:#fff;">1,42</div>
<div class="a " style="left:720px;top:209px;width:83px;height:19px;background:#00ff00"></div>
<div class="a t" style="left:750.8px;top:212px;line-height:14px;font-family:'Liberation Sans',sans-serif;font-size:11px;">1,00</div>
<div class="a t" style="left:829.5px;top:212px;line-height:14px;font-family:'Liberation Sans',sans-serif;font-size:11px;">эффективно</div>
<div class="a " style="left:636px;top:228px;width:284px;height:1px;background:#ccc"></div>
<div class="a " style="left:719px;top:209px;width:1px;height:20px;background:#ccc"></div>
<div class="a " style="left:803px;top:209px;width:1px;height:20px;background:#ccc"></div>
<div class="a " style="left:919px;top:209px;width:1px;height:20px;background:#ccc"></div>
<div class="a " style="left:591px;top:229px;width:44px;height:19px;background:#ccc"></div>
<div class="a t" style="left:604.7px;top:232px;line-height:14px;font-family:'Liberation Sans',sans-serif;font-size:11px;">E d</div>
<div class="a " style="left:635px;top:229px;width:1px;height:20px;background:#000000"></div>
<div class="a " style="left:591px;top:248px;width:45px;height:1px;background:#000000"></div>
<div class="a " style="left:636px;top:229px;width:83px;height:19px;background:#000099"></div>
<div class="a t" style="left:665.7px;top:232px;line-height:14px;font-family:'Liberation Sans',sans-serif;font-size:11px;font-weight:bold;letter-spacing:0.79px;color:#fff;">1,30</div>
<div class="a " style="left:720px;top:229px;width:83px;height:19px;background:#00ff00"></div>
<div class="a t" style="left:750.8px;top:232px;line-height:14px;font-family:'Liberation Sans',sans-serif;font-size:11px;">1,00</div>
<div class="a t" style="left:829.5px;top:232px;line-height:14px;font-family:'Liberation Sans',sans-serif;font-size:11px;">эффективно</div>
<div class="a " style="left:636px;top:248px;width:284px;height:1px;background:#ccc"></div>
<div class="a " style="left:719px;top:229px;width:1px;height:20px;background:#ccc"></div>
<div class="a " style="left:803px;top:229px;width:1px;height:20px;background:#ccc"></div>
<div class="a " style="left:919px;top:229px;width:1px;height:20px;background:#ccc"></div>
<div class="a " style="left:591px;top:249px;width:44px;height:19px;background:#ccc"></div>
<div class="a t" style="left:601.2px;top:252px;line-height:14px;font-family:'Liberation Sans',sans-serif;font-size:11px;">RP s</div>
<div class="a " style="left:635px;top:249px;width:1px;height:20px;background:#000000"></div>
<div class="a " style="left:591px;top:268px;width:45px;height:1px;background:#000000"></div>
<div class="a " style="left:636px;top:249px;width:83px;height:19px;background:#000099"></div>
<div class="a t" style="left:665.7px;top:252px;line-height:14px;font-family:'Liberation Sans',sans-serif;font-size:11px;font-weight:bold;letter-spacing:0.79px;color:#fff;">1,32</div>
<div class="a " style="left:720px;top:249px;width:83px;height:19px;background:#00ff00"></div>
<div class="a t" style="left:750.8px;top:252px;line-height:14px;font-family:'Liberation Sans',sans-serif;font-size:11px;">1,00</div>
<div class="a t" style="left:829.5px;top:252px;line-height:14px;font-family:'Liberation Sans',sans-serif;font-size:11px;">эффективно</div>
<div class="a " style="left:636px;top:268px;width:284px;height:1px;background:#ccc"></div>
<div class="a " style="left:719px;top:249px;width:1px;height:20px;background:#ccc"></div>
<div class="a " style="left:803px;top:249px;width:1px;height:20px;background:#ccc"></div>
<div class="a " style="left:919px;top:249px;width:1px;height:20px;background:#ccc"></div>
<div class="a " style="left:591px;top:269px;width:44px;height:19px;background:#ccc"></div>
<div class="a t" style="left:600.9px;top:272px;line-height:14px;font-family:'Liberation Sans',sans-serif;font-size:11px;">RP d</div>
<div class="a " style="left:635px;top:269px;width:1px;height:20px;background:#000000"></div>
<div class="a " style="left:591px;top:288px;width:45px;height:1px;background:#000000"></div>
<div class="a " style="left:636px;top:269px;width:83px;height:19px;background:#ff00ff"></div>
<div class="a t" style="left:665.7px;top:272px;line-height:14px;font-family:'Liberation Sans',sans-serif;font-size:11px;font-weight:bold;letter-spacing:0.79px;color:#fff;">0,96</div>
<div class="a " style="left:720px;top:269px;width:83px;height:19px;background:#00ff00"></div>
<div class="a t" style="left:750.8px;top:272px;line-height:14px;font-family:'Liberation Sans',sans-serif;font-size:11px;">1,00</div>
<div class="a t" style="left:829.5px;top:272px;line-height:14px;font-family:'Liberation Sans',sans-serif;font-size:11px;">эффективно</div>
<div class="a " style="left:636px;top:288px;width:284px;height:1px;background:#ccc"></div>
<div class="a " style="left:719px;top:269px;width:1px;height:20px;background:#ccc"></div>
<div class="a " style="left:803px;top:269px;width:1px;height:20px;background:#ccc"></div>
<div class="a " style="left:919px;top:269px;width:1px;height:20px;background:#ccc"></div>
<div class="a " style="left:591px;top:289px;width:44px;height:19px;background:#ccc"></div>
<div class="a t" style="left:604.8px;top:292px;line-height:14px;font-family:'Liberation Sans',sans-serif;font-size:11px;">C s</div>
<div class="a " style="left:635px;top:289px;width:1px;height:20px;background:#000000"></div>
<div class="a " style="left:591px;top:308px;width:45px;height:1px;background:#000000"></div>
<div class="a " style="left:636px;top:289px;width:83px;height:19px;background:#ff0000"></div>
<div class="a t" style="left:665.7px;top:292px;line-height:14px;font-family:'Liberation Sans',sans-serif;font-size:11px;font-weight:bold;letter-spacing:0.79px;color:#fff;">0,71</div>
<div class="a " style="left:720px;top:289px;width:83px;height:19px;background:#00ff00"></div>
<div class="a t" style="left:750.8px;top:292px;line-height:14px;font-family:'Liberation Sans',sans-serif;font-size:11px;">1,00</div>
<div class="a t" style="left:829.5px;top:292px;line-height:14px;font-family:'Liberation Sans',sans-serif;font-size:11px;">эффективно</div>
<div class="a " style="left:636px;top:308px;width:284px;height:1px;background:#ccc"></div>
<div class="a " style="left:719px;top:289px;width:1px;height:20px;background:#ccc"></div>
<div class="a " style="left:803px;top:289px;width:1px;height:20px;background:#ccc"></div>
<div class="a " style="left:919px;top:289px;width:1px;height:20px;background:#ccc"></div>
<div class="a " style="left:591px;top:309px;width:44px;height:19px;background:#ccc"></div>
<div class="a t" style="left:604.4px;top:312px;line-height:14px;font-family:'Liberation Sans',sans-serif;font-size:11px;">C d</div>
<div class="a " style="left:635px;top:309px;width:1px;height:20px;background:#000000"></div>
<div class="a " style="left:591px;top:328px;width:45px;height:1px;background:#000000"></div>
<div class="a " style="left:636px;top:309px;width:83px;height:19px;background:#ff0000"></div>
<div class="a t" style="left:665.7px;top:312px;line-height:14px;font-family:'Liberation Sans',sans-serif;font-size:11px;font-weight:bold;letter-spacing:0.79px;color:#fff;">0,39</div>
<div class="a " style="left:720px;top:309px;width:83px;height:19px;background:#00ff00"></div>
<div class="a t" style="left:750.8px;top:312px;line-height:14px;font-family:'Liberation Sans',sans-serif;font-size:11px;">1,00</div>
<div class="a t" style="left:829.5px;top:312px;line-height:14px;font-family:'Liberation Sans',sans-serif;font-size:11px;">эффективно</div>
<div class="a " style="left:636px;top:328px;width:284px;height:1px;background:#ccc"></div>
<div class="a " style="left:719px;top:309px;width:1px;height:20px;background:#ccc"></div>
<div class="a " style="left:803px;top:309px;width:1px;height:20px;background:#ccc"></div>
<div class="a " style="left:919px;top:309px;width:1px;height:20px;background:#ccc"></div>
<div class="a " style="left:591px;top:329px;width:44px;height:19px;background:#ccc"></div>
<div class="a t" style="left:602.9px;top:332px;line-height:14px;font-family:'Liberation Sans',sans-serif;font-size:11px;">IG s</div>
<div class="a " style="left:635px;top:329px;width:1px;height:20px;background:#000000"></div>
<div class="a " style="left:591px;top:348px;width:45px;height:1px;background:#000000"></div>
<div class="a " style="left:636px;top:329px;width:83px;height:19px;background:#ff0000"></div>
<div class="a t" style="left:665.7px;top:332px;line-height:14px;font-family:'Liberation Sans',sans-serif;font-size:11px;font-weight:bold;letter-spacing:0.79px;color:#fff;">0,61</div>
<div class="a " style="left:720px;top:329px;width:83px;height:19px;background:#00ff00"></div>
<div class="a t" style="left:750.8px;top:332px;line-height:14px;font-family:'Liberation Sans',sans-serif;font-size:11px;">1,00</div>
<div class="a t" style="left:829.5px;top:332px;line-height:14px;font-family:'Liberation Sans',sans-serif;font-size:11px;">эффективно</div>
<div class="a " style="left:636px;top:348px;width:284px;height:1px;background:#ccc"></div>
<div class="a " style="left:719px;top:329px;width:1px;height:20px;background:#ccc"></div>
<div class="a " style="left:803px;top:329px;width:1px;height:20px;background:#ccc"></div>
<div class="a " style="left:919px;top:329px;width:1px;height:20px;background:#ccc"></div>
<div class="a " style="left:591px;top:349px;width:44px;height:19px;background:#ccc"></div>
<div class="a t" style="left:602.6px;top:352px;line-height:14px;font-family:'Liberation Sans',sans-serif;font-size:11px;">IG d</div>
<div class="a " style="left:635px;top:349px;width:1px;height:20px;background:#000000"></div>
<div class="a " style="left:591px;top:368px;width:45px;height:1px;background:#000000"></div>
<div class="a " style="left:636px;top:349px;width:83px;height:19px;background:#ff0000"></div>
<div class="a t" style="left:665.7px;top:352px;line-height:14px;font-family:'Liberation Sans',sans-serif;font-size:11px;font-weight:bold;letter-spacing:0.79px;color:#fff;">0,37</div>
<div class="a " style="left:720px;top:349px;width:83px;height:19px;background:#00ff00"></div>
<div class="a t" style="left:750.8px;top:352px;line-height:14px;font-family:'Liberation Sans',sans-serif;font-size:11px;">1,00</div>
<div class="a t" style="left:829.5px;top:352px;line-height:14px;font-family:'Liberation Sans',sans-serif;font-size:11px;">эффективно</div>
<div class="a " style="left:636px;top:368px;width:284px;height:1px;background:#ccc"></div>
<div class="a " style="left:719px;top:349px;width:1px;height:20px;background:#ccc"></div>
<div class="a " style="left:803px;top:349px;width:1px;height:20px;background:#ccc"></div>
<div class="a " style="left:919px;top:349px;width:1px;height:20px;background:#ccc"></div>
<div class="a " style="left:591px;top:369px;width:44px;height:19px;background:#ccc"></div>
<div class="a t" style="left:605.0px;top:372px;line-height:14px;font-family:'Liberation Sans',sans-serif;font-size:11px;">V s</div>
<div class="a " style="left:635px;top:369px;width:1px;height:20px;background:#000000"></div>
<div class="a " style="left:591px;top:388px;width:45px;height:1px;background:#000000"></div>
<div class="a " style="left:636px;top:369px;width:83px;height:19px;background:#ff0000"></div>
<div class="a t" style="left:665.7px;top:372px;line-height:14px;font-family:'Liberation Sans',sans-serif;font-size:11px;font-weight:bold;letter-spacing:0.79px;color:#fff;">0,49</div>
<div class="a " style="left:720px;top:369px;width:83px;height:19px;background:#00ff00"></div>
<div class="a t" style="left:750.8px;top:372px;line-height:14px;font-family:'Liberation Sans',sans-serif;font-size:11px;">1,00</div>
<div class="a t" style="left:829.5px;top:372px;line-height:14px;font-family:'Liberation Sans',sans-serif;font-size:11px;">эффективно</div>
<div class="a " style="left:636px;top:388px;width:284px;height:1px;background:#ccc"></div>
<div class="a " style="left:719px;top:369px;width:1px;height:20px;background:#ccc"></div>
<div class="a " style="left:803px;top:369px;width:1px;height:20px;background:#ccc"></div>
<div class="a " style="left:919px;top:369px;width:1px;height:20px;background:#ccc"></div>
<div class="a " style="left:591px;top:389px;width:44px;height:19px;background:#ccc"></div>
<div class="a t" style="left:604.7px;top:392px;line-height:14px;font-family:'Liberation Sans',sans-serif;font-size:11px;">V d</div>
<div class="a " style="left:635px;top:389px;width:1px;height:20px;background:#000000"></div>
<div class="a " style="left:591px;top:408px;width:45px;height:1px;background:#000000"></div>
<div class="a " style="left:636px;top:389px;width:83px;height:19px;background:#ff0000"></div>
<div class="a t" style="left:665.7px;top:392px;line-height:14px;font-family:'Liberation Sans',sans-serif;font-size:11px;font-weight:bold;letter-spacing:0.79px;color:#fff;">0,41</div>
<div class="a " style="left:720px;top:389px;width:83px;height:19px;background:#00ff00"></div>
<div class="a t" style="left:750.8px;top:392px;line-height:14px;font-family:'Liberation Sans',sans-serif;font-size:11px;">1,00</div>
<div class="a t" style="left:829.5px;top:392px;line-height:14px;font-family:'Liberation Sans',sans-serif;font-size:11px;">эффективно</div>
<div class="a " style="left:636px;top:408px;width:284px;height:1px;background:#ccc"></div>
<div class="a " style="left:719px;top:389px;width:1px;height:20px;background:#ccc"></div>
<div class="a " style="left:803px;top:389px;width:1px;height:20px;background:#ccc"></div>
<div class="a " style="left:919px;top:389px;width:1px;height:20px;background:#ccc"></div>
<div class="a " style="left:591px;top:409px;width:44px;height:19px;background:#ccc"></div>
<div class="a t" style="left:604.8px;top:412px;line-height:14px;font-family:'Liberation Sans',sans-serif;font-size:11px;">R s</div>
<div class="a " style="left:635px;top:409px;width:1px;height:20px;background:#000000"></div>
<div class="a " style="left:591px;top:428px;width:45px;height:1px;background:#000000"></div>
<div class="a " style="left:636px;top:409px;width:83px;height:19px;background:#000099"></div>
<div class="a t" style="left:665.7px;top:412px;line-height:14px;font-family:'Liberation Sans',sans-serif;font-size:11px;font-weight:bold;letter-spacing:0.79px;color:#fff;">1,28</div>
<div class="a " style="left:720px;top:409px;width:83px;height:19px;background:#00ff00"></div>
<div class="a t" style="left:750.8px;top:412px;line-height:14px;font-family:'Liberation Sans',sans-serif;font-size:11px;">1,00</div>
<div class="a t" style="left:829.5px;top:412px;line-height:14px;font-family:'Liberation Sans',sans-serif;font-size:11px;">эффективно</div>
<div class="a " style="left:636px;top:428px;width:284px;height:1px;background:#ccc"></div>
<div class="a " style="left:719px;top:409px;width:1px;height:20px;background:#ccc"></div>
<div class="a " style="left:803px;top:409px;width:1px;height:20px;background:#ccc"></div>
<div class="a " style="left:919px;top:409px;width:1px;height:20px;background:#ccc"></div>
<div class="a " style="left:591px;top:429px;width:44px;height:19px;background:#ccc"></div>
<div class="a t" style="left:604.4px;top:432px;line-height:14px;font-family:'Liberation Sans',sans-serif;font-size:11px;">R d</div>
<div class="a " style="left:635px;top:429px;width:1px;height:20px;background:#000000"></div>
<div class="a " style="left:591px;top:448px;width:45px;height:1px;background:#000000"></div>
<div class="a " style="left:636px;top:429px;width:83px;height:19px;background:#000099"></div>
<div class="a t" style="left:665.7px;top:432px;line-height:14px;font-family:'Liberation Sans',sans-serif;font-size:11px;font-weight:bold;letter-spacing:0.79px;color:#fff;">1,24</div>
<div class="a " style="left:720px;top:429px;width:83px;height:19px;background:#00ff00"></div>
<div class="a t" style="left:750.8px;top:432px;line-height:14px;font-family:'Liberation Sans',sans-serif;font-size:11px;">1,00</div>
<div class="a t" style="left:829.5px;top:432px;line-height:14px;font-family:'Liberation Sans',sans-serif;font-size:11px;">эффективно</div>
<div class="a " style="left:636px;top:448px;width:284px;height:1px;background:#ccc"></div>
<div class="a " style="left:719px;top:429px;width:1px;height:20px;background:#ccc"></div>
<div class="a " style="left:803px;top:429px;width:1px;height:20px;background:#ccc"></div>
<div class="a " style="left:919px;top:429px;width:1px;height:20px;background:#ccc"></div>
<div class="a " style="left:591px;top:449px;width:44px;height:19px;background:#ccc"></div>
<div class="a t" style="left:600.2px;top:452px;line-height:14px;font-family:'Liberation Sans',sans-serif;font-size:11px;">MC s</div>
<div class="a " style="left:635px;top:449px;width:1px;height:20px;background:#000000"></div>
<div class="a " style="left:591px;top:468px;width:45px;height:1px;background:#000000"></div>
<div class="a " style="left:636px;top:449px;width:83px;height:19px;background:#ff0000"></div>
<div class="a t" style="left:665.7px;top:452px;line-height:14px;font-family:'Liberation Sans',sans-serif;font-size:11px;font-weight:bold;letter-spacing:0.79px;color:#fff;">0,67</div>
<div class="a " style="left:720px;top:449px;width:83px;height:19px;background:#00ff00"></div>
<div class="a t" style="left:750.8px;top:452px;line-height:14px;font-family:'Liberation Sans',sans-serif;font-size:11px;">1,00</div>
<div class="a t" style="left:829.5px;top:452px;line-height:14px;font-family:'Liberation Sans',sans-serif;font-size:11px;">эффективно</div>
<div class="a " style="left:636px;top:468px;width:284px;height:1px;background:#ccc"></div>
<div class="a " style="left:719px;top:449px;width:1px;height:20px;background:#ccc"></div>
<div class="a " style="left:803px;top:449px;width:1px;height:20px;background:#ccc"></div>
<div class="a " style="left:919px;top:449px;width:1px;height:20px;background:#ccc"></div>
<div class="a " style="left:591px;top:469px;width:44px;height:19px;background:#ccc"></div>
<div class="a t" style="left:599.9px;top:472px;line-height:14px;font-family:'Liberation Sans',sans-serif;font-size:11px;">MC d</div>
<div class="a " style="left:635px;top:469px;width:1px;height:20px;background:#000000"></div>
<div class="a " style="left:591px;top:488px;width:45px;height:1px;background:#000000"></div>
<div class="a " style="left:636px;top:469px;width:83px;height:19px;background:#ff0000"></div>
<div class="a t" style="left:665.7px;top:472px;line-height:14px;font-family:'Liberation Sans',sans-serif;font-size:11px;font-weight:bold;letter-spacing:0.79px;color:#fff;">0,67</div>
<div class="a " style="left:720px;top:469px;width:83px;height:19px;background:#00ff00"></div>
<div class="a t" style="left:750.8px;top:472px;line-height:14px;font-family:'Liberation Sans',sans-serif;font-size:11px;">1,00</div>
<div class="a t" style="left:829.5px;top:472px;line-height:14px;font-family:'Liberation Sans',sans-serif;font-size:11px;">эффективно</div>
<div class="a " style="left:636px;top:488px;width:284px;height:1px;background:#ccc"></div>
<div class="a " style="left:719px;top:469px;width:1px;height:20px;background:#ccc"></div>
<div class="a " style="left:803px;top:469px;width:1px;height:20px;background:#ccc"></div>
<div class="a " style="left:919px;top:469px;width:1px;height:20px;background:#ccc"></div>
<div class="a " style="left:591px;top:489px;width:44px;height:19px;background:#ccc"></div>
<div class="a t" style="left:601.4px;top:492px;line-height:14px;font-family:'Liberation Sans',sans-serif;font-size:11px;">TR s</div>
<div class="a " style="left:635px;top:489px;width:1px;height:20px;background:#000000"></div>
<div class="a " style="left:591px;top:508px;width:45px;height:1px;background:#000000"></div>
<div class="a " style="left:636px;top:489px;width:83px;height:19px;background:#000099"></div>
<div class="a t" style="left:665.7px;top:492px;line-height:14px;font-family:'Liberation Sans',sans-serif;font-size:11px;font-weight:bold;letter-spacing:0.79px;color:#fff;">1,51</div>
<div class="a " style="left:720px;top:489px;width:83px;height:19px;background:#00ff00"></div>
<div class="a t" style="left:750.8px;top:492px;line-height:14px;font-family:'Liberation Sans',sans-serif;font-size:11px;">1,00</div>
<div class="a t" style="left:829.5px;top:492px;line-height:14px;font-family:'Liberation Sans',sans-serif;font-size:11px;">эффективно</div>
<div class="a " style="left:636px;top:508px;width:284px;height:1px;background:#ccc"></div>
<div class="a " style="left:719px;top:489px;width:1px;height:20px;background:#ccc"></div>
<div class="a " style="left:803px;top:489px;width:1px;height:20px;background:#ccc"></div>
<div class="a " style="left:919px;top:489px;width:1px;height:20px;background:#ccc"></div>
<div class="a " style="left:591px;top:509px;width:44px;height:19px;background:#ccc"></div>
<div class="a t" style="left:601.1px;top:512px;line-height:14px;font-family:'Liberation Sans',sans-serif;font-size:11px;">TR d</div>
<div class="a " style="left:635px;top:509px;width:1px;height:20px;background:#000000"></div>
<div class="a " style="left:591px;top:528px;width:45px;height:1px;background:#000000"></div>
<div class="a " style="left:636px;top:509px;width:83px;height:19px;background:#000099"></div>
<div class="a t" style="left:665.7px;top:512px;line-height:14px;font-family:'Liberation Sans',sans-serif;font-size:11px;font-weight:bold;letter-spacing:0.79px;color:#fff;">1,12</div>
<div class="a " style="left:720px;top:509px;width:83px;height:19px;background:#00ff00"></div>
<div class="a t" style="left:750.8px;top:512px;line-height:14px;font-family:'Liberation Sans',sans-serif;font-size:11px;">1,00</div>
<div class="a t" style="left:829.5px;top:512px;line-height:14px;font-family:'Liberation Sans',sans-serif;font-size:11px;">эффективно</div>
<div class="a " style="left:636px;top:528px;width:284px;height:1px;background:#ccc"></div>
<div class="a " style="left:719px;top:509px;width:1px;height:20px;background:#ccc"></div>
<div class="a " style="left:803px;top:509px;width:1px;height:20px;background:#ccc"></div>
<div class="a " style="left:919px;top:509px;width:1px;height:20px;background:#ccc"></div>
<div class="a " style="left:591px;top:529px;width:44px;height:19px;background:#ccc"></div>
<div class="a t" style="left:601.4px;top:532px;line-height:14px;font-family:'Liberation Sans',sans-serif;font-size:11px;">VB s</div>
<div class="a " style="left:635px;top:529px;width:1px;height:20px;background:#000000"></div>
<div class="a " style="left:591px;top:548px;width:45px;height:1px;background:#000000"></div>
<div class="a " style="left:636px;top:529px;width:83px;height:19px;background:#000099"></div>
<div class="a t" style="left:665.7px;top:532px;line-height:14px;font-family:'Liberation Sans',sans-serif;font-size:11px;font-weight:bold;letter-spacing:0.79px;color:#fff;">1,32</div>
<div class="a " style="left:720px;top:529px;width:83px;height:19px;background:#00ff00"></div>
<div class="a t" style="left:750.8px;top:532px;line-height:14px;font-family:'Liberation Sans',sans-serif;font-size:11px;">1,00</div>
<div class="a t" style="left:829.5px;top:532px;line-height:14px;font-family:'Liberation Sans',sans-serif;font-size:11px;">эффективно</div>
<div class="a " style="left:636px;top:548px;width:284px;height:1px;background:#ccc"></div>
<div class="a " style="left:719px;top:529px;width:1px;height:20px;background:#ccc"></div>
<div class="a " style="left:803px;top:529px;width:1px;height:20px;background:#ccc"></div>
<div class="a " style="left:919px;top:529px;width:1px;height:20px;background:#ccc"></div>
<div class="a " style="left:591px;top:549px;width:44px;height:19px;background:#ccc"></div>
<div class="a t" style="left:601.1px;top:552px;line-height:14px;font-family:'Liberation Sans',sans-serif;font-size:11px;">VB d</div>
<div class="a " style="left:635px;top:549px;width:1px;height:20px;background:#000000"></div>
<div class="a " style="left:591px;top:568px;width:45px;height:1px;background:#000000"></div>
<div class="a " style="left:636px;top:549px;width:83px;height:19px;background:#000099"></div>
<div class="a t" style="left:665.7px;top:552px;line-height:14px;font-family:'Liberation Sans',sans-serif;font-size:11px;font-weight:bold;letter-spacing:0.79px;color:#fff;">1,10</div>
<div class="a " style="left:720px;top:549px;width:83px;height:19px;background:#00ff00"></div>
<div class="a t" style="left:750.8px;top:552px;line-height:14px;font-family:'Liberation Sans',sans-serif;font-size:11px;">1,00</div>
<div class="a t" style="left:829.5px;top:552px;line-height:14px;font-family:'Liberation Sans',sans-serif;font-size:11px;">эффективно</div>
<div class="a " style="left:636px;top:568px;width:284px;height:1px;background:#ccc"></div>
<div class="a " style="left:719px;top:549px;width:1px;height:20px;background:#ccc"></div>
<div class="a " style="left:803px;top:549px;width:1px;height:20px;background:#ccc"></div>
<div class="a " style="left:919px;top:549px;width:1px;height:20px;background:#ccc"></div>
<div class="a " style="left:591px;top:569px;width:44px;height:19px;background:#ccc"></div>
<div class="a t" style="left:605.4px;top:572px;line-height:14px;font-family:'Liberation Sans',sans-serif;font-size:11px;">F s</div>
<div class="a " style="left:635px;top:569px;width:1px;height:20px;background:#000000"></div>
<div class="a " style="left:591px;top:588px;width:45px;height:1px;background:#000000"></div>
<div class="a " style="left:636px;top:569px;width:83px;height:19px;background:#000099"></div>
<div class="a t" style="left:665.7px;top:572px;line-height:14px;font-family:'Liberation Sans',sans-serif;font-size:11px;font-weight:bold;letter-spacing:0.79px;color:#fff;">1,55</div>
<div class="a " style="left:720px;top:569px;width:83px;height:19px;background:#00ff00"></div>
<div class="a t" style="left:750.8px;top:572px;line-height:14px;font-family:'Liberation Sans',sans-serif;font-size:11px;">1,00</div>
<div class="a t" style="left:829.5px;top:572px;line-height:14px;font-family:'Liberation Sans',sans-serif;font-size:11px;">эффективно</div>
<div class="a " style="left:636px;top:588px;width:284px;height:1px;background:#ccc"></div>
<div class="a " style="left:719px;top:569px;width:1px;height:20px;background:#ccc"></div>
<div class="a " style="left:803px;top:569px;width:1px;height:20px;background:#ccc"></div>
<div class="a " style="left:919px;top:569px;width:1px;height:20px;background:#ccc"></div>
<div class="a " style="left:591px;top:589px;width:44px;height:19px;background:#ccc"></div>
<div class="a t" style="left:605.0px;top:592px;line-height:14px;font-family:'Liberation Sans',sans-serif;font-size:11px;">F d</div>
<div class="a " style="left:635px;top:589px;width:1px;height:20px;background:#000000"></div>
<div class="a " style="left:591px;top:608px;width:45px;height:1px;background:#000000"></div>
<div class="a " style="left:636px;top:589px;width:83px;height:19px;background:#000099"></div>
<div class="a t" style="left:665.7px;top:592px;line-height:14px;font-family:'Liberation Sans',sans-serif;font-size:11px;font-weight:bold;letter-spacing:0.79px;color:#fff;">1,36</div>
<div class="a " style="left:720px;top:589px;width:83px;height:19px;background:#00ff00"></div>
<div class="a t" style="left:750.8px;top:592px;line-height:14px;font-family:'Liberation Sans',sans-serif;font-size:11px;">1,00</div>
<div class="a t" style="left:829.5px;top:592px;line-height:14px;font-family:'Liberation Sans',sans-serif;font-size:11px;">эффективно</div>
<div class="a " style="left:636px;top:608px;width:284px;height:1px;background:#ccc"></div>
<div class="a " style="left:719px;top:589px;width:1px;height:20px;background:#ccc"></div>
<div class="a " style="left:803px;top:589px;width:1px;height:20px;background:#ccc"></div>
<div class="a " style="left:919px;top:589px;width:1px;height:20px;background:#ccc"></div>
<div class="a t" style="left:589.6px;top:632px;line-height:18px;font-family:'Liberation Sans',sans-serif;font-size:14px;letter-spacing:0.14px;">эффективно</div>
<div class="a t" style="left:674.6px;top:632px;line-height:18px;font-family:'Liberation Sans',sans-serif;font-size:14px;font-weight:bold;letter-spacing:-0.78px;color:#f00;">24</div>
<div class="a t" style="left:753.3px;top:632px;line-height:18px;font-family:'Liberation Sans',sans-serif;font-size:14px;letter-spacing:0.2px;">неэффективно</div>
<div class="a t" style="left:853.8px;top:632px;line-height:18px;font-family:'Liberation Sans',sans-serif;font-size:14px;font-weight:bold;color:#f00;">0</div>
<div class="a et" style="left:514px;top:678px;width:489px;height:49px;"></div>
<div class="a " style="left:520px;top:672px;width:352px;height:14px;background:#ccc"></div>
<div class="a t" style="left:523px;top:670px;line-height:18px;font-family:'Liberation Sans',sans-serif;font-size:14px;letter-spacing:-0.1px;">Цветовая шкала состояния меридиональной системы</div>
<div class="a sk " style="left:516px;top:695px;width:105px;height:21px;background:#000099"></div>
<div class="a t" style="left:519.7px;top:697px;line-height:17px;font-family:'Liberation Serif',serif;font-size:13.5px;font-weight:bold;color:#fff;transform:scaleX(0.8929);transform-origin:0 0;">Сильно в Инь</div>
<div class="a sk " style="left:625px;top:695px;width:85px;height:21px;background:#0000ff"></div>
<div class="a t" style="left:628px;top:697px;line-height:17px;font-family:'Liberation Serif',serif;font-size:13.5px;font-weight:bold;color:#fff;transform:scaleX(0.8783);transform-origin:0 0;">в Инь</div>
<div class="a sk " style="left:712px;top:695px;width:87px;height:21px;background:#00ff00"></div>
<div class="a t" style="left:715.1px;top:697px;line-height:17px;font-family:'Liberation Serif',serif;font-size:13.5px;font-weight:bold;color:#fff;transform:scaleX(0.8857);transform-origin:0 0;">Норма</div>
<div class="a sk " style="left:803px;top:695px;width:88px;height:21px;background:#ff00ff"></div>
<div class="a t" style="left:805.4px;top:697px;line-height:17px;font-family:'Liberation Serif',serif;font-size:13.5px;font-weight:bold;color:#fff;transform:scaleX(0.9006);transform-origin:0 0;">в Ян</div>
<div class="a sk " style="left:895px;top:695px;width:101px;height:21px;background:#ff0000"></div>
<div class="a t" style="left:898.9px;top:697px;line-height:17px;font-family:'Liberation Serif',serif;font-size:13.5px;font-weight:bold;color:#fff;transform:scaleX(0.9012);transform-origin:0 0;">Сильно в Ян</div>
</div></body></html>
